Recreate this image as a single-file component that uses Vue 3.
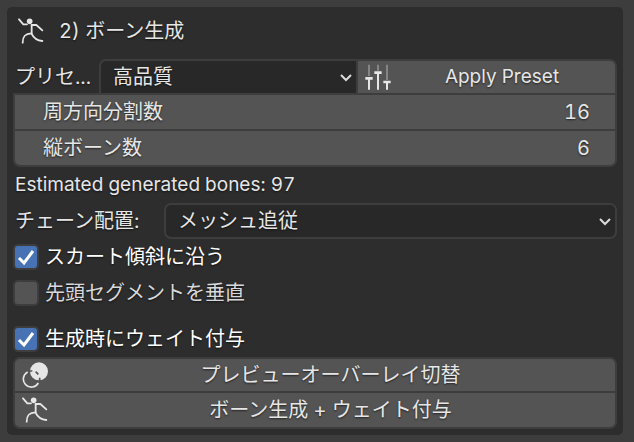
<script setup>
import { ref } from 'vue'

const preset = ref('高品質')
const layout = ref('メッシュ追従')
const fields = ref([
  { id: 'radial', label: '周方向分割数', value: '16' },
  { id: 'vertical', label: '縦ボーン数', value: '6' },
])
const slope = ref(true)
const upright = ref(false)
const weights = ref(true)
</script>

<template>
  <main class="panel">
    <svg width="0" height="0" class="defs" aria-hidden="true">
      <symbol id="figure" viewBox="0 0 78 78">
        <g fill="none" stroke="currentColor" stroke-width="5.5" stroke-linecap="round" stroke-linejoin="round">
          <path d="M3 4 L16 19 H27" />
          <path d="M41 21 H55 L73 37" />
          <path d="M41 21 V46" />
          <path d="M14 74 C14 55 21 47 40 46 C46 58 56 68 73 69" />
        </g>
        <circle cx="35" cy="10" r="8.5" fill="currentColor" />
      </symbol>
    </svg>

    <header class="title">
      <svg class="icon" aria-hidden="true"><use href="#figure" /></svg>
      <h1>2) ボーン生成</h1>
    </header>

    <section class="group">
      <div class="preset">
        <label for="preset" class="preset-label">プリセ...</label>
        <div class="select joined">
          <select id="preset" v-model="preset"><option>高品質</option></select>
          <svg class="chevron" viewBox="0 0 14 10" aria-hidden="true"><path d="M2 2 L7 7 L12 2" /></svg>
        </div>
        <button type="button" class="apply">
          <svg class="icon" viewBox="0 0 78 78" aria-hidden="true">
            <g fill="none" stroke-width="6">
              <path class="dim" d="M12 2 V36 M39 2 V20 M66 2 V48" />
              <path class="lit" d="M12 43 V77 M39 26 V77 M66 54 V77" />
              <path class="lit" stroke-width="8" d="M1 43 H23 M28 26 H50 M55 54 H77" />
            </g>
          </svg>
          <span>Apply Preset</span>
        </button>
      </div>
      <div v-for="f in fields" :key="f.id" class="field">
        <label :for="f.id">{{ f.label }}</label>
        <input :id="f.id" v-model="f.value" type="text" inputmode="numeric" />
      </div>
    </section>

    <p class="estimate">Estimated generated bones: 97</p>

    <div class="chain">
      <label for="layout">チェーン配置:</label>
      <div class="select">
        <select id="layout" v-model="layout"><option>メッシュ追従</option></select>
        <svg class="chevron" viewBox="0 0 14 10" aria-hidden="true"><path d="M2 2 L7 7 L12 2" /></svg>
      </div>
    </div>

    <div class="checks">
      <label class="check on">
        <input v-model="slope" type="checkbox" />
        <svg viewBox="0 0 26 26" aria-hidden="true"><path d="M6 14 L11 19 L20 7" /></svg>
        <span>スカート傾斜に沿う</span>
      </label>
      <label class="check">
        <input v-model="upright" type="checkbox" />
        <svg viewBox="0 0 26 26" aria-hidden="true"><path d="M6 14 L11 19 L20 7" /></svg>
        <span>先頭セグメントを垂直</span>
      </label>
    </div>
    <label class="check on">
      <input v-model="weights" type="checkbox" />
      <svg viewBox="0 0 26 26" aria-hidden="true"><path d="M6 14 L11 19 L20 7" /></svg>
      <span>生成時にウェイト付与</span>
    </label>

    <section class="group actions">
      <button type="button">
        <svg class="icon" viewBox="0 0 78 78" aria-hidden="true">
          <circle cx="51" cy="28" r="27" fill="currentColor" />
          <path class="ring" d="M17 30 A24 24 0 1 0 49 63" />
          <path class="cut" d="M22 27 L31 27 M53 47 V57" />
          <path class="cut" d="M41 29 L49 37" />
        </svg>
        <span>プレビューオーバーレイ切替</span>
      </button>
      <button type="button">
        <svg class="icon" aria-hidden="true"><use href="#figure" /></svg>
        <span>ボーン生成 + ウェイト付与</span>
      </button>
    </section>
  </main>
</template>

<style>
body {
  margin: 0;
  background: #3d3d3d;
}
</style>

<style scoped>
.panel,
.panel * {
  box-sizing: border-box;
}
.panel {
  margin: 7px 11px 7px 7px;
  padding: 6px;
  border-radius: 5px;
  background: #2d2d2d;
  color: #e6e6e6;
  font: 20px/24px Inter, "Noto Sans CJK JP", sans-serif;
  font-variant-numeric: tabular-nums;
  text-shadow: 0 1px 2px rgba(0, 0, 0, 0.6);
}
.defs {
  position: absolute;
}
h1,
p {
  margin: 0;
  font-size: inherit;
  font-weight: inherit;
}
.title {
  display: flex;
  align-items: center;
  gap: 15px;
  height: 36px;
  padding-left: 5px;
}
.icon {
  flex: none;
  width: 26px;
  height: 26px;
}
button,
select,
input {
  margin: 0;
  padding: 0;
  border: 0;
  color: inherit;
  font: inherit;
  font-variant-numeric: inherit;
  text-shadow: inherit;
}
.group {
  margin-top: 10px;
}
.preset {
  display: grid;
  grid-template-columns: 86px minmax(0, 1fr) minmax(0, 1fr);
  height: 36px;
}
.preset-label {
  padding-left: 2px;
  line-height: 36px;
  white-space: nowrap;
}
.select {
  position: relative;
  flex: 1;
  min-width: 0;
}
.select select {
  appearance: none;
  display: block;
  width: 100%;
  height: 36px;
  padding: 0 36px 0 12px;
  border: 2px solid #3d3d3d;
  border-radius: 7px;
  background: #282828;
}
.joined select {
  border-radius: 7px 0 0 0;
}
.chevron {
  position: absolute;
  right: 5px;
  top: 14px;
  width: 14px;
  height: 10px;
  fill: none;
  stroke: #dcdcdc;
  stroke-width: 2;
  pointer-events: none;
}
button {
  display: flex;
  align-items: center;
  width: 100%;
  height: 36px;
  padding: 0 2px 0 7px;
  border: 2px solid #3d3d3d;
  background: #545454;
  white-space: nowrap;
}
.apply {
  border-left: 0;
  border-radius: 0 7px 0 0;
  font-size: 19px;
}
button span {
  flex: 1;
  text-align: center;
}
.dim {
  stroke: #858585;
}
.lit {
  stroke: #e6e6e6;
}
.field {
  display: flex;
  align-items: center;
  height: 36px;
  padding: 0 25px 0 28px;
  border: 2px solid #3d3d3d;
  border-top: 0;
  background: #545454;
}
.preset + .field {
  height: 38px;
  margin-top: -2px;
  border-top: 2px solid #3d3d3d;
}
.field:last-child {
  border-radius: 0 0 7px 7px;
}
.field label {
  flex: none;
}
.field input {
  flex: 1;
  min-width: 0;
  background: transparent;
  text-align: right;
}
.estimate {
  padding: 6px 2px;
  font-size: 19px;
}
.chain {
  display: flex;
  align-items: center;
}
.chain label {
  flex: none;
  width: 151px;
  padding-left: 2px;
}
.checks {
  display: grid;
  gap: 10px;
  margin: 5px 0 20px;
}
.check {
  display: flex;
  align-items: center;
  position: relative;
  height: 26px;
  gap: 6px;
  color: #d9d9d9;
}
.check.on {
  color: #fff;
}
.check input {
  appearance: none;
  flex: none;
  width: 26px;
  height: 26px;
  border: 2px solid #3d3d3d;
  border-radius: 5px;
  background: #545454;
}
.check input:checked {
  background: #4772b3;
}
.check svg {
  display: none;
  position: absolute;
  left: 0;
  top: 0;
  width: 26px;
  height: 26px;
  fill: none;
  stroke: #fff;
  stroke-width: 3;
  pointer-events: none;
}
.check input:checked + svg {
  display: block;
}
.actions {
  margin-top: 5px;
}
.actions button:first-child {
  border-radius: 7px 7px 0 0;
}
.actions button:last-child {
  height: 38px;
  margin-top: -2px;
  border-radius: 0 0 7px 7px;
}
.ring {
  fill: none;
  stroke: #e6e6e6;
  stroke-width: 5;
}
.cut {
  fill: none;
  stroke: #545454;
  stroke-width: 5;
}
</style>
